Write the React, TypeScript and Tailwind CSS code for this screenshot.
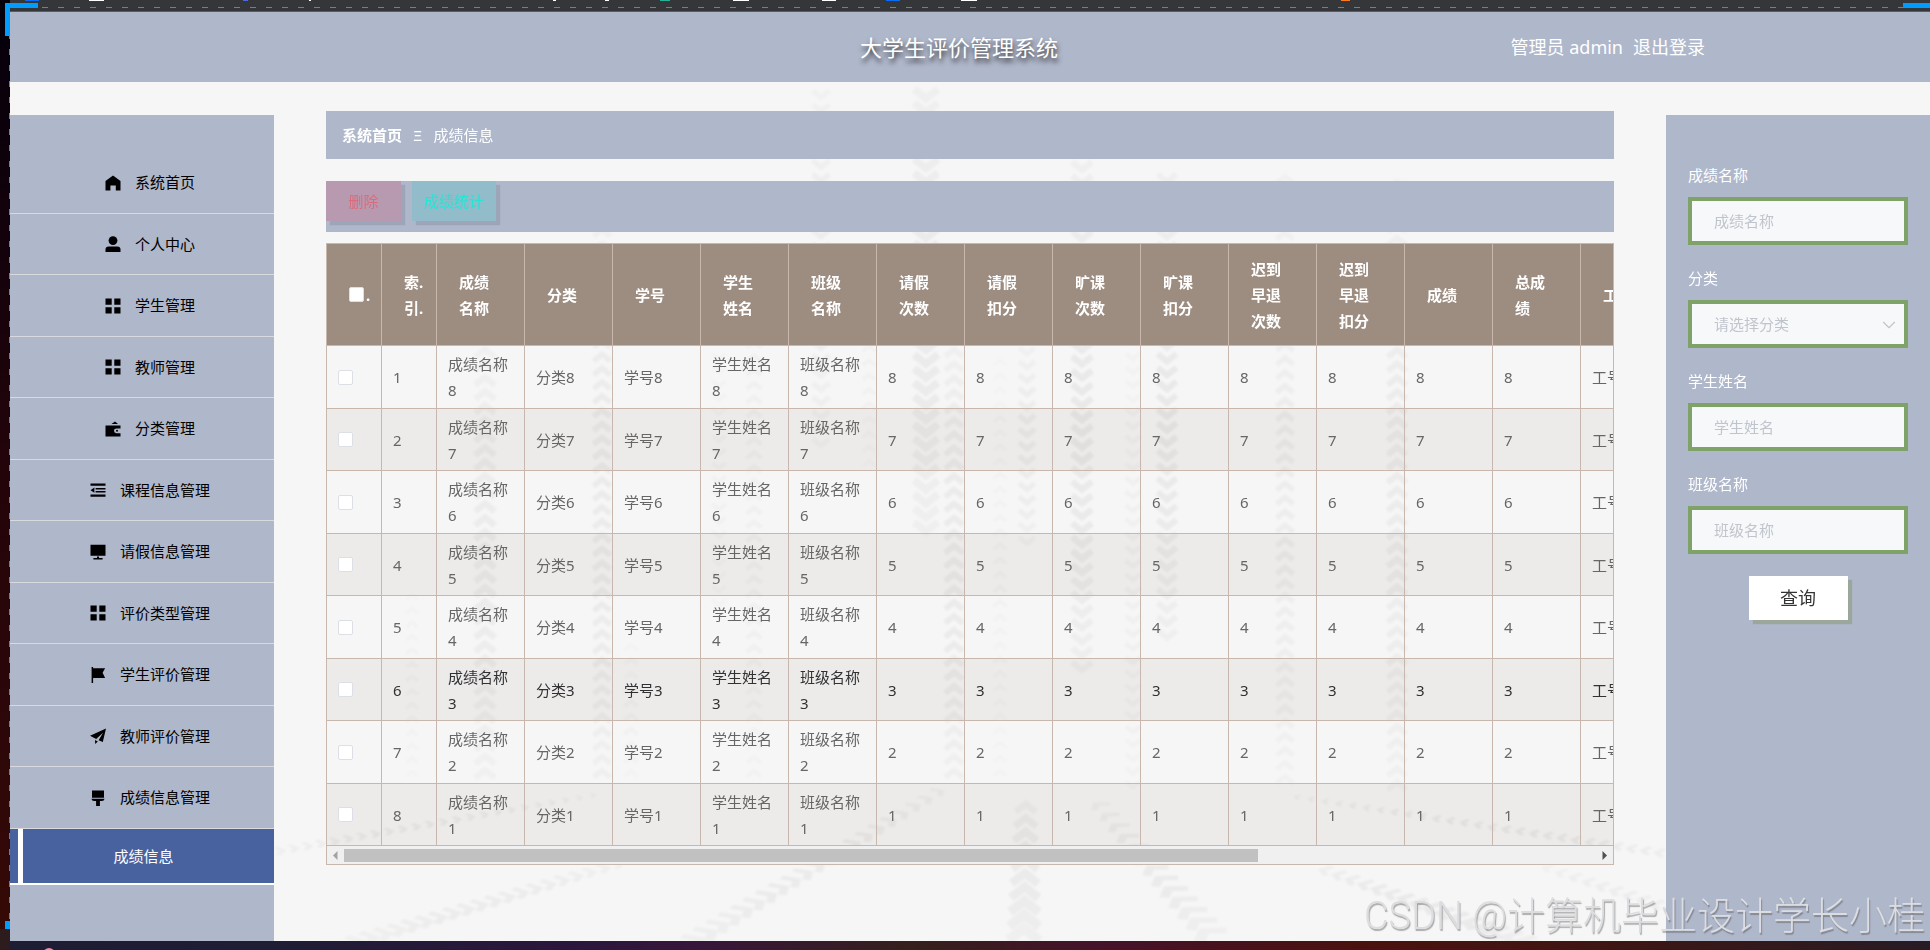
import React from "react";
import { ChevronDown } from "lucide-react";

type IconName = "home" | "user" | "menu" | "wallet" | "fold" | "platform" | "flag" | "promotion" | "brush";

const iconShapes: Record<IconName, React.ReactNode> = {
  home: <path d="M8 0.4 L15.5 6 V15.4 H10.8 V10.4 H5.4 V15.4 H0.5 V6 Z" />,
  user: (
    <>
      <circle cx="8" cy="4.6" r="4.4" />
      <path d="M0.5 16 V13.6 Q0.5 10.4 3.7 10.4 H12.3 Q15.5 10.4 15.5 13.6 V16 Z" />
    </>
  ),
  menu: <path d="M0.5 0.5h6.2v6.2H0.5z M9.3 0.5h6.2v6.2H9.3z M0.5 9.3h6.2v6.2H0.5z M9.3 9.3h6.2v6.2H9.3z" />,
  wallet: (
    <>
      <path d="M6.5 3 L10 0.4 L13 3 Z" />
      <path d="M0.5 4.4 L15.5 4.4 V7.4 H11.4 Q9 7.4 9 9.8 Q9 12.2 11.4 12.2 H15.5 V15.4 H0.5 Z" />
      <circle cx="12" cy="9.8" r="1" />
    </>
  ),
  fold: <path d="M0.5 1.6h15v2.2H0.5z M5.6 6h9.9v1.6H5.6z M5.6 8.9h9.9v1.6H5.6z M0.5 12.6h15v2.2H0.5z M0.5 8.2L4.4 5.6v5.2z" />,
  platform: <path d="M0.5 0.8h15v11H0.5z M7 12.6h2v1.4h3.6v1.6H3.4v-1.6H7z" />,
  flag: <path d="M1.6 0h1.5v1.2h12L12.6 5.8l2.5 5.2H3.1v5H1.6z" />,
  promotion: <path d="M16 0.4 L12.8 14 L8.6 12.2 L13 4.8 L6.2 11 L0 7.8 Z M5 12 L7.8 13.4 L5.2 16 Z" />,
  brush: <path d="M2 0.4h12v7.4H2z M1.4 8.8h13.2Q14.2 11 11.8 11H9.9v5H6.1v-5H4.2Q1.8 11 1.4 8.8z" />,
};

const menuItems: { label: string; icon: IconName }[] = [
  { label: "系统首页", icon: "home" },
  { label: "个人中心", icon: "user" },
  { label: "学生管理", icon: "menu" },
  { label: "教师管理", icon: "menu" },
  { label: "分类管理", icon: "wallet" },
  { label: "课程信息管理", icon: "fold" },
  { label: "请假信息管理", icon: "platform" },
  { label: "评价类型管理", icon: "menu" },
  { label: "学生评价管理", icon: "flag" },
  { label: "教师评价管理", icon: "promotion" },
  { label: "成绩信息管理", icon: "brush" },
];

const columns: { title: string; prefix: string }[] = [
  { title: "成绩名称", prefix: "成绩名称" },
  { title: "分类", prefix: "分类" },
  { title: "学号", prefix: "学号" },
  { title: "学生姓名", prefix: "学生姓名" },
  { title: "班级名称", prefix: "班级名称" },
  { title: "请假次数", prefix: "" },
  { title: "请假扣分", prefix: "" },
  { title: "旷课次数", prefix: "" },
  { title: "旷课扣分", prefix: "" },
  { title: "迟到早退次数", prefix: "" },
  { title: "迟到早退扣分", prefix: "" },
  { title: "成绩", prefix: "" },
  { title: "总成绩", prefix: "" },
  { title: "工号", prefix: "工号" },
];
const rows = [8, 7, 6, 5, 4, 3, 2, 1];
const hoveredRow = 5;

type Trail = { from: [number, number]; to: [number, number]; w: number; w2?: number; o: number };

/* Tyre tracks: each one runs from its tail to the end its chevrons point at. */
const trails: Trail[] = [
  { from: [485, 780], to: [485, 345], w: 20, o: 0.04 },
  { from: [602, 780], to: [602, 225], w: 17, o: 0.045 },
  { from: [412, 780], to: [412, 590], w: 12, o: 0.02 },
  { from: [631, 780], to: [631, 640], w: 14, o: 0.02 },
  { from: [719, 350], to: [719, 610], w: 14, o: 0.02 },
  { from: [754, 780], to: [754, 240], w: 15, o: 0.025 },
  { from: [821, 88], to: [821, 450], w: 17, o: 0.035 },
  { from: [869, 470], to: [869, 240], w: 13, o: 0.02 },
  { from: [926, 88], to: [926, 535], w: 24, o: 0.045 },
  { from: [954, 780], to: [954, 345], w: 18, o: 0.045 },
  { from: [1000, 780], to: [1000, 355], w: 13, o: 0.018 },
  { from: [1027, 345], to: [1027, 548], w: 16, o: 0.04 },
  { from: [1082, 160], to: [1082, 674], w: 20, o: 0.05 },
  { from: [1133, 350], to: [1133, 792], w: 15, o: 0.024 },
  { from: [1167, 172], to: [1167, 642], w: 19, o: 0.05 },
  { from: [1285, 786], to: [1285, 172], w: 17, o: 0.035 },
  { from: [1397, 792], to: [1397, 178], w: 19, o: 0.04 },
  { from: [274, 852], to: [600, 794], w: 13, w2: 8, o: 0.05 },
  { from: [350, 944], to: [625, 862], w: 22, w2: 15, o: 0.04 },
  { from: [690, 944], to: [945, 788], w: 24, w2: 14, o: 0.045 },
  { from: [1024, 940], to: [1026, 800], w: 32, w2: 20, o: 0.045 },
  { from: [1212, 938], to: [1094, 800], w: 28, w2: 16, o: 0.045 },
  { from: [1530, 944], to: [1318, 868], w: 24, w2: 15, o: 0.05 },
  { from: [1680, 856], to: [1290, 796], w: 14, w2: 8, o: 0.055 },
  { from: [1690, 916], to: [1540, 866], w: 18, w2: 13, o: 0.035 },
];

function Tracks() {
  return (
    <svg aria-hidden="true" className="pointer-events-none absolute inset-0 h-full w-full" viewBox="0 82 1930 859" preserveAspectRatio="xMidYMin slice">
      <defs>
        <filter id="soft" x="-5%" y="-5%" width="110%" height="110%">
          <feGaussianBlur stdDeviation="1.3" />
        </filter>
      </defs>
      <g filter="url(#soft)" fill="none" stroke="#000">
        {trails.map((t, k) => {
          const dx = t.to[0] - t.from[0];
          const dy = t.to[1] - t.from[1];
          const n = Math.round(Math.hypot(dx, dy) / 14);
          const angle = (Math.atan2(dy, dx) * 180) / Math.PI + 90;
          const squash = Math.abs(dx) > 20 ? "scale(1.3 0.6)" : "";
          return Array.from({ length: n }, (_, i) => {
            const f = (i + 0.5) / n;
            const w = t.w + ((t.w2 ?? t.w) - t.w) * f;
            const fade = 0.35 + 0.65 * Math.sin(Math.PI * (0.1 + 0.8 * f));
            return (
              <path
                key={`${k}-${i}`}
                d={`M${-w / 2} ${w * 0.25} L0 ${-w * 0.15} L${w / 2} ${w * 0.25}`}
                strokeWidth={w * 0.33}
                opacity={t.o * fade}
                transform={`translate(${t.from[0] + dx * f} ${t.from[1] + dy * f}) ${squash} rotate(${angle})`}
              />
            );
          });
        })}
      </g>
    </svg>
  );
}

function BrowserEdge() {
  return (
    <svg aria-hidden="true" className="pointer-events-none absolute left-0 top-0 h-[3px] w-[1930px]" viewBox="0 0 1930 3">
      <path fill="#0a6cf0" d="M25 0h14v1H25z M886 0h14v1h-14z" />
      <path fill="#fff" d="M89 0h15v1H89z M309 0h2v1h-2z M553 0h3v1h-3z M605 0h4v1h-4z M733 0h16v1h-16z M822 0h14v1h-14z M961 0h16v1h-16z" />
      <path fill="#4a6be0" d="M243 0h5v1h-5z" />
      <path fill="#25b39c" d="M660 0h10v1h-10z" />
      <path fill="#ff7a1a" d="M1341 0h9v1h-9z" />
    </svg>
  );
}

function SelectionFrame() {
  return (
    <div aria-hidden="true" className="pointer-events-none absolute inset-0 overflow-hidden">
      <svg className="absolute left-0 top-0 h-full w-full">
        <path d="M42 7.5H4000" stroke="#109cf8" strokeWidth="1" strokeDasharray="6 10" />
        <path d="M9.5 33V921" stroke="#109cf8" strokeWidth="1" strokeDasharray="6 10" />
        <path d="M5 3H38V8H10V36H5Z" fill="#009dff" />
        <path d="M5 921H10V929H5Z" fill="#009dff" />
      </svg>
      <div className="absolute right-0 top-[3px] h-[5px] w-[27px] bg-[#009dff]" />
    </div>
  );
}

const inputClass =
  "h-12 w-full rounded-none border-4 border-[#7ea268] bg-[#f7f8fa] px-[22px] text-[15px] text-[#606266] outline-none placeholder:text-[#c0c4cc]";

function Field({ id, label, select }: { id: string; label: string; select?: boolean }) {
  return (
    <div className="mb-[11px]">
      <label htmlFor={id} className="flex h-11 items-center text-[15px] text-white">{label}</label>
      {select ? (
        <div className="relative">
          <select id={id} defaultValue="" className="h-12 w-full appearance-none rounded-none border-4 border-[#7ea268] bg-[#f7f8fa] px-[22px] text-[15px] text-[#c0c4cc] outline-none">
            <option value="">请选择分类</option>
          </select>
          <ChevronDown className="pointer-events-none absolute right-2 top-3.5 size-[22px] text-[#c0c4cc]" strokeWidth={1.25} />
        </div>
      ) : (
        <input id={id} type="text" placeholder={label} className={inputClass} />
      )}
    </div>
  );
}

const checkboxClass = "block size-[15px] appearance-none rounded-[2px] border border-[#dcdfe6] bg-white";

export default function App() {
  return (
    <div className="relative flex min-h-screen overflow-hidden bg-[#f6f6f6] font-['Noto_Sans','Noto_Sans_CJK_SC',sans-serif] text-[15px]">
      <div className="flex w-2.5 shrink-0 flex-col">
        <div className="flex-1 bg-linear-to-b from-[#05000a] via-[#23040a] to-[#350a06]" />
        <div className="h-[21px] bg-[#2c1c1e]" />
      </div>
      <div className="flex min-w-0 flex-1 flex-col">
        <div className="h-3 border-b border-[#5b5c5e] bg-[#353639]" />
        <header className="grid h-[70px] grid-cols-[1fr_auto_1fr] items-center bg-[#afb7cb] pr-[22px] text-white">
          <h1 className="col-start-2 text-[22px] [text-shadow:1px_4px_5px_#333]">大学生评价管理系统</h1>
          <div className="flex justify-end gap-2.5 pr-[203px] text-[18px]">
            <span>管理员 admin</span>
            <a href="#logout">退出登录</a>
          </div>
        </header>

        <div className="relative flex flex-1">
          <div className="absolute inset-y-0 -left-2.5 right-0 [clip-path:inset(0_0_0_10px)]"><Tracks /></div>

          <nav aria-label="主菜单" className="relative mt-[33px] w-[264px] shrink-0 bg-[#afb7cb] pt-[37px]">
            <ul>
              {menuItems.map((m) => (
                <li key={m.label} className="border-b border-[#d9dadd] odd:h-[62px] even:h-[61px]">
                  <a href="#menu" className="flex h-full items-center justify-center gap-3.5 pl-4 text-black">
                    <svg className="size-4 fill-black" viewBox="0 0 16 16" aria-hidden="true">{iconShapes[m.icon]}</svg>
                    {m.label}
                  </a>
                </li>
              ))}
            </ul>
            <div className="border-b-2 border-white bg-[#4862a0] pl-2">
              <a href="#scores" aria-current="page" className="flex h-[54px] items-center justify-center border-l-[5px] border-white pr-2.5 text-white">成绩信息</a>
            </div>
          </nav>

          <main className="relative min-w-0 flex-1 px-[52px] pt-[29px]">
            <nav aria-label="面包屑" className="flex h-12 items-center gap-[11px] bg-[#afb7cb] px-4 text-white">
              <a href="#home" className="font-bold">系统首页</a>
              <span>Ξ</span>
              <span>成绩信息</span>
            </nav>

            <div className="mt-[22px] flex h-[51px] items-start gap-[11px] bg-[#afb7cb]">
              <button type="button" className="h-10 w-[75px] bg-[#b89ab0] text-[#d96c7c] shadow-[4px_4px_1px_#9da5b8]">删除</button>
              <button type="button" className="h-10 w-[84px] bg-[#93bccb] text-[#22e5d3] shadow-[4px_4px_1px_#9da5b8]">成绩统计</button>
            </div>

            <div className="mt-[11px] border border-[#c8b7ad]">
              <div className="overflow-hidden">
                <table className="w-[1342px] table-fixed border-separate border-spacing-0 leading-[26px]">
                  <colgroup>
                    <col className="w-[55px]" />
                    <col className="w-[55px]" />
                    {columns.map((c) => <col key={c.title} className="w-[88px]" />)}
                  </colgroup>
                  <thead className="bg-[#9d8c80] text-left text-white">
                    <tr className="h-[102px]">
                      <th className="border-r border-b border-[#c8b7ad] pl-[22px]">
                        <span className="flex items-center gap-0.5">
                          <input type="checkbox" aria-label="全选" className={checkboxClass} />.
                        </span>
                      </th>
                      <th className="border-r border-b border-[#c8b7ad] pl-[22px]">索.<br />引.</th>
                      {columns.map((c) => (
                        <th key={c.title} className="border-r border-b border-[#c8b7ad] px-[22px]">{c.title}</th>
                      ))}
                    </tr>
                  </thead>
                  <tbody>
                    {rows.map((n, i) => (
                      <tr key={n} className={`odd:h-[63px] even:h-[62px] even:bg-[#9d8c80]/10 ${i === hoveredRow ? "text-[#303133]" : "text-[#666666]"}`}>
                        <td className="border-r border-b border-[#c8b7ad] pl-[11px]">
                          <input type="checkbox" aria-label={`选择第${i + 1}行`} className={checkboxClass} />
                        </td>
                        <td className="border-r border-b border-[#c8b7ad] px-[11px]">{i + 1}</td>
                        {columns.map((c) => (
                          <td key={c.title} className="border-r border-b border-[#c8b7ad] px-[11px]">{c.prefix + n}</td>
                        ))}
                      </tr>
                    ))}
                  </tbody>
                </table>
              </div>
              <div aria-hidden="true" className="flex h-[18px] items-center bg-[#f0f0f1]">
                <svg className="h-[17px] w-[17px] shrink-0" viewBox="0 0 17 17"><path fill="#a3a3a3" d="M10.500 4v9L6 8.500z" /></svg>
                <div className="flex-1"><div className="h-[13px] w-[73%] bg-[#c1c1c1]" /></div>
                <svg className="h-[17px] w-[17px] shrink-0" viewBox="0 0 17 17"><path fill="#505050" d="M6.500 4v9l4.500-4.500z" /></svg>
              </div>
            </div>
          </main>

          <aside className="relative mt-[33px] w-[264px] shrink-0 bg-[#afb7cb] px-[22px] pt-[38px]">
            <form onSubmit={(e) => e.preventDefault()}>
              <Field id="score-name" label="成绩名称" />
              <Field id="category" label="分类" select />
              <Field id="student-name" label="学生姓名" />
              <Field id="class-name" label="班级名称" />
              <div className="flex justify-center pt-[11px]">
                <button type="submit" className="h-11 w-[99px] bg-white text-[18px] text-[#333333] shadow-[4px_4px_1px_#9ba79a]">查询</button>
              </div>
            </form>
          </aside>

          <p className="pointer-events-none absolute right-[5px] bottom-0 font-['Roboto','Noto_Sans_CJK_SC',sans-serif] text-[38px] leading-[50px] font-light whitespace-nowrap text-[#dcdde0] [text-shadow:1px_2px_1px_rgba(80,80,80,0.45)]">
            CSDN @计算机毕业设计学长小桂
          </p>
        </div>

        <div className="h-[9px] bg-[linear-gradient(90deg,#1d1d33_0%,#201c36_16%,#2c163c_30%,#37163a_36%,#35201c_47%,#45122a_57%,#4a120f_70%,#421511_80%,#271c24_100%)]">
          <svg aria-hidden="true" className="h-[9px] w-[60px]" viewBox="0 0 60 9"><circle cx="39" cy="13" r="6" fill="#f08ca0" /></svg>
        </div>
      </div>
      <BrowserEdge />
      <SelectionFrame />
    </div>
  );
}
